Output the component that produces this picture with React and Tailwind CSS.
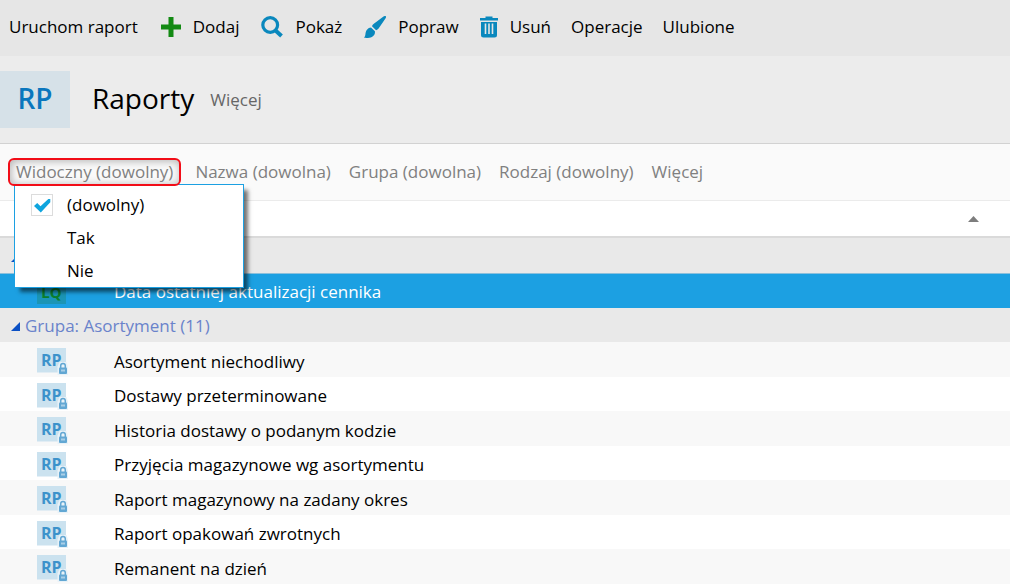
import { useState } from 'react';

const filters = ['Nazwa (dowolna)', 'Grupa (dowolna)', 'Rodzaj (dowolny)', 'Więcej'];

const options = ['(dowolny)', 'Tak', 'Nie'];

const reports = [
  'Asortyment niechodliwy',
  'Dostawy przeterminowane',
  'Historia dostawy o podanym kodzie',
  'Przyjęcia magazynowe wg asortymentu',
  'Raport magazynowy na zadany okres',
  'Raport opakowań zwrotnych',
  'Remanent na dzień',
];

function PlusIcon() {
  return (
    <svg className="size-5" viewBox="0 0 20 20" fill="#138a13">
      <path d="M7.500 0h5v7.500H20v5h-7.500V20h-5v-7.500H0v-5h7.500z" />
    </svg>
  );
}

function SearchIcon() {
  return (
    <svg className="size-[22px]" viewBox="0 0 22 22" fill="none" stroke="#0a88bd">
      <circle cx="9.200" cy="9" r="7.400" strokeWidth="3.200" />
      <path d="M14 14l6.500 6" strokeWidth="4" />
    </svg>
  );
}

function BrushIcon() {
  return (
    <svg className="size-[22px]" viewBox="0 0 22 22" fill="#0a88bd">
      <path d="M21.800.2c.5.600.2 1.300-.2 2L14.600 12.600c-.7.900-1.500 1.500-2.500 1.700L8 10.300c.2-.9.700-1.700 1.500-2.400L19.500.6c.8-.6 1.700-.9 2.300-.4z" />
      <path d="M7 11.400l3.900 3.900c.4 2.300-.8 4.400-3 5.600-2 1-5 1.200-7.900.9 1.200-1.100 1.300-2.400 1.500-4.200C1.900 14.300 3.900 11.600 7 11.400z" />
    </svg>
  );
}

function TrashIcon() {
  return (
    <svg className="h-[22px] w-[18px]" viewBox="0 0 18 22">
      <path d="M5.500 2V.6h7V2H18v2.500H0V2z" fill="#0a88bd" />
      <path d="M1 6h16v13a2.500 2.500 0 0 1-2.500 2.500h-11A2.500 2.500 0 0 1 1 19z" fill="#0a88bd" />
      <path d="M5.500 7.500v10.500M9 7.500v10.500M12.500 7.500v10.500" stroke="#e6e6e6" strokeWidth="1.600" />
    </svg>
  );
}

function ReportIcon() {
  return (
    <svg className="h-[27px] w-[31px]" viewBox="0 0 31 27">
      <rect x="0" y="0" width="29" height="24.500" fill="#cbe2ef" />
      <text x="4" y="18" fontSize="16" fontWeight="700" fill="#3c92cb" fontFamily="Open Sans, sans-serif">
        RP
      </text>
      <path d="M20.500 27V18.500L22.500 14h7l1.500 4.500V27z" fill="#e8f2f8" />
      <path d="M23.700 20v-2.200a2.300 2.300 0 0 1 4.600 0V20" fill="none" stroke="#62a7d3" strokeWidth="1.500" />
      <rect x="22" y="19.500" width="8" height="6.500" rx="1" fill="#62a7d3" />
      <rect x="24" y="21.500" width="4" height="2" fill="#a9cfe7" />
    </svg>
  );
}

function GroupArrow() {
  return (
    <svg className="size-[10px]" viewBox="0 0 10 10" fill="#0b50c4">
      <path d="M10 1v9H1z" />
    </svg>
  );
}

function Toolbar() {
  return (
    <nav className="flex h-14 items-center gap-5 bg-[#e6e6e6] px-[9px] pb-[2px]">
      <button className="mr-[2px]">Uruchom raport</button>
      <button className="flex items-center gap-3 px-px"><PlusIcon />Dodaj</button>
      <button className="flex items-center gap-3 px-px"><SearchIcon />Pokaż</button>
      <button className="flex items-center gap-3 px-px"><BrushIcon />Popraw</button>
      <button className="flex items-center gap-3"><TrashIcon />Usuń</button>
      <button>Operacje</button>
      <button>Ulubione</button>
    </nav>
  );
}

function VisibleFilter() {
  const [selected, setSelected] = useState('(dowolny)');
  return (
    <div className="relative">
      <button className="relative z-20 block h-7 rounded-md border-2 border-[#f20d18] px-[6px] shadow-[inset_1px_1px_8px_rgba(0,0,0,0.3)]">
        Widoczny (dowolny)
      </button>
      <div className="absolute top-[26px] left-[6px] z-10 w-[230px] border border-[#1ca0e2] bg-white pt-[3px] text-black shadow-[5px_5px_4px_-1px_rgba(0,0,0,0.55)]">
        {options.map((option) => (
          <label key={option} className="flex h-[33px] items-center gap-[14px] pl-4">
            <span className="relative">
              <input
                type="radio"
                name="visible"
                checked={selected === option}
                onChange={() => setSelected(option)}
                className="block size-[22px] appearance-none border border-transparent checked:border-[#dcdcdc]"
              />
              {selected === option && (
                <svg className="pointer-events-none absolute inset-0 size-[22px]" viewBox="0 0 22 22" fill="#0fa5de">
                  <path d="M3 12l3.200-3 3.300 3.200L17.300 5h2v3.300L9.800 18.500z" />
                </svg>
              )}
            </span>
            {option}
          </label>
        ))}
      </div>
    </div>
  );
}

function App() {
  return (
    <div className="min-h-screen bg-white font-['Open_Sans',sans-serif] text-[17px] leading-6 text-black">
      <Toolbar />

      <header className="flex h-[88px] items-center border-b border-[#d2d2d2] bg-[#ececec]">
        <div className="flex h-[57px] w-[70px] items-center justify-center bg-[#d6e1e8] pb-1 text-[28px] font-semibold text-[#0a76bd]">
          RP
        </div>
        <h1 className="ml-[22px] pb-1 text-[28px] leading-9">Raporty</h1>
        <button className="ml-4 text-[#666]">Więcej</button>
      </header>

      <div className="flex h-[57px] items-center gap-[14px] border-b border-[#ebebeb] bg-[#fafafa] pl-2 text-[#808080]">
        <VisibleFilter />
        <div className="flex gap-[18px]">
          {filters.map((filter) => (
            <button key={filter}>{filter}</button>
          ))}
        </div>
      </div>

      <table className="w-full table-fixed border-collapse text-left">
        <colgroup>
          <col className="w-[114px]" />
          <col />
          <col className="w-6" />
        </colgroup>
        <thead>
          <tr className="h-9 border-b-2 border-[#dadada]">
            <th></th>
            <th>
              <svg className="mr-[7px] ml-auto h-[6px] w-[11px]" viewBox="0 0 11 6" fill="#7d7d7d">
                <path d="M5.500 0L11 6H0z" />
              </svg>
            </th>
            <th></th>
          </tr>
        </thead>
        <tbody>
          <tr className="h-9 bg-[#e9e9e9]">
            <td colSpan="3" className="pt-[2px] pl-[10px]"><GroupArrow /></td>
          </tr>
          <tr className="h-[35px] bg-[#1ca0e2] text-white shadow-[inset_0_1px_#8cc0dc]">
            <td className="pt-[2px] pl-[37px]">
              <div className="h-6 w-[29px] bg-[#1b95b5] text-center text-[15px] font-bold text-[#0b7f2c]">LQ</div>
            </td>
            <td className="pt-[2px]">Data ostatniej aktualizacji cennika</td>
            <td></td>
          </tr>
          <tr className="h-[34px] bg-[#e9e9e9] text-[#6a83cb]">
            <td colSpan="3" className="pt-[2px] pl-[10px]">
              <div className="flex items-center gap-[5px]"><GroupArrow />Grupa: Asortyment (11)</div>
            </td>
          </tr>
          {reports.map((report) => (
            <tr key={report} className="h-[35px] bg-white odd:h-[34px] even:bg-[#f8f8f8]">
              <td className="pt-1 pl-[37px]"><ReportIcon /></td>
              <td className="pt-1">{report}</td>
              <td></td>
            </tr>
          ))}
        </tbody>
      </table>
    </div>
  );
}

export default App;
